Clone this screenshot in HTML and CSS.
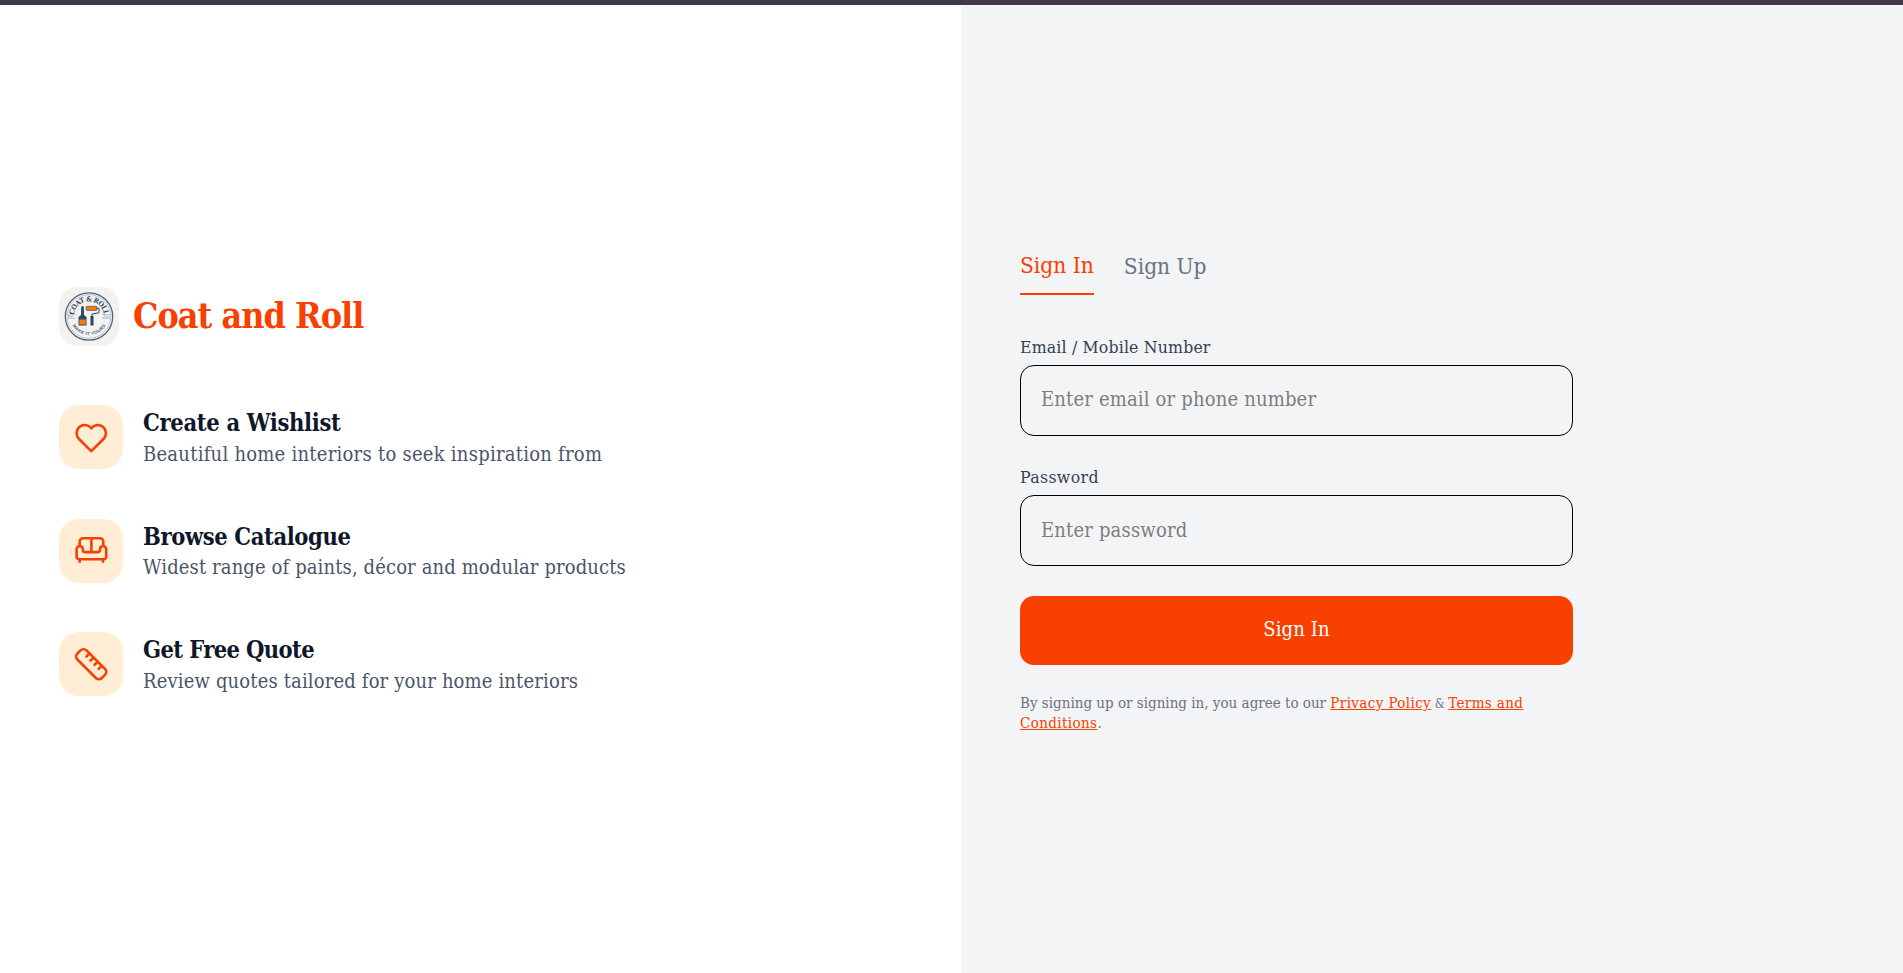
FILE: index.html
```html
<!DOCTYPE html>
<html lang="en">
<head>
<meta charset="utf-8">
<title>Coat and Roll</title>
<link rel="stylesheet" href="styles.css">
</head>
<body>
<div class="page">
  <section class="intro">
    <div class="brand">
      <svg class="logo" viewBox="0 0 60 59">
        <rect width="60" height="59" rx="18" fill="#f4f2ed"/>
        <circle cx="30" cy="29.5" r="23.7" fill="none" stroke="#4c6585" stroke-width="1.3"/>
        <circle cx="30" cy="29.5" r="21.8" fill="none" stroke="#9aabbd" stroke-width=".6"/>
        <path id="top-arc" d="M14.9 29.5a15.1 15.1 0 0 1 30.2 0" fill="none"/>
        <path id="low-arc" d="M11.3 29.5a18.7 18.7 0 0 0 37.4 0" fill="none"/>
        <text class="seal-name" text-anchor="middle"><textPath href="#top-arc" startOffset="50%" textLength="44">COAT &amp; ROLL</textPath></text>
        <text class="seal-motto" text-anchor="middle"><textPath href="#low-arc" startOffset="50%" textLength="40">MAKE IT YOURS</textPath></text>
        <path d="M7.500 27.500h9M7.500 31.500h9M43 27.500h9M43 31.500h9" stroke="#a9b5c2" stroke-width=".6"/>
        <text class="seal-year" x="9" y="30.700">EST</text><text class="seal-year" x="44" y="30.700">2024</text>
        <path d="M22.200 20q1.300-2 2.600 0l.2 8 2.500 2v8.500h-8V30l2.500-2z" fill="#28456b"/>
        <path d="M20.300 32.500h6.500v5h-6.500z" fill="#f57c0c"/>
        <rect x="27" y="19.300" width="11" height="4.200" rx="1" fill="#f57c0c" stroke="#28456b" stroke-width=".6"/>
        <path d="M38 21.300h2v4.500l-7 1.200v5" fill="none" stroke="#28456b" stroke-width="1"/>
        <path d="M31.500 29h3v9.500h-3z" fill="#28456b"/>
      </svg>
      <h1 class="brand-name">Coat and Roll</h1>
    </div>
    <div class="feature">
      <svg class="tile" viewBox="0 0 64 64"><path transform="translate(12.700 13.500) scale(1.630)" stroke-width="1.600" d="M19.500 12.572 12 20l-7.500-7.428A5 5 0 1 1 12 6.006a5 5 0 1 1 7.500 6.572"/></svg>
      <div class="copy"><h2 class="name n1">Create a Wishlist</h2><p class="desc d1">Beautiful home interiors to seek inspiration from</p></div>
    </div>
    <div class="feature second">
      <svg class="tile" viewBox="0 0 64 64"><path d="M20.700 26.500V22.500a3.300 3.300 0 0 1 3.300-3.300H41a3.300 3.300 0 0 1 3.300 3.300v4M32.400 19.200v13.500M17.600 30.200a2.900 2.900 0 0 1 2.900-3h.6a2.800 2.800 0 0 1 2.700 2.700v1.200a2 2 0 0 0 2 2h13.200a2 2 0 0 0 2-2v-1.200a2.800 2.800 0 0 1 2.700-2.700h.6a2.900 2.900 0 0 1 2.900 3v7.600a2.500 2.500 0 0 1-2.500 2.500H20.100a2.500 2.500 0 0 1-2.500-2.500zM20.700 40.500v2.300M44 40.500v2.300"/></svg>
      <div class="copy"><h2 class="name n2">Browse Catalogue</h2><p class="desc d2">Widest range of paints, décor and modular products</p></div>
    </div>
    <div class="feature">
      <svg class="tile" viewBox="0 0 64 64"><g transform="translate(32.200 32.200) rotate(45)"><rect x="-17.300" y="-6.400" width="34.600" height="12.800" rx="4.200"/><path d="M-8.800-6.400v4.400M-3-6.400v4.400M2.800-6.400v4.400M8.600-6.400v4.400"/></g></svg>
      <div class="copy"><h2 class="name n3">Get Free Quote</h2><p class="desc d3">Review quotes tailored for your home interiors</p></div>
    </div>
  </section>
  <section class="auth">
    <div class="tabs"><span class="tab active">Sign In</span><span class="tab idle">Sign Up</span></div>
    <label class="label l1" for="user">Email / Mobile Number</label>
    <input class="field" id="user" placeholder="Enter email or phone number">
    <label class="label l2" for="pass">Password</label>
    <input class="field pass" id="pass" type="password" placeholder="Enter password">
    <button class="submit">Sign In</button>
    <p class="terms">By signing up or signing in, you agree to our <a>Privacy Policy</a><span class="amp"> &amp; </span><a>Terms and<br>Conditions</a>.</p>
  </section>
</div>
</body>
</html>
```
FILE: styles.css
```css
* { box-sizing: border-box; }
body { margin: 0; background: #fff; font-family: "Roboto Slab", "DejaVu Serif Condensed", "DejaVu Serif", serif; }
h1, h2, p { margin: 0; font-weight: 400; }
.page { height: 973px; border-top: 5px solid #40374b; display: grid; grid-template-columns: 961px 1fr; overflow: hidden; }
.intro { padding: 282px 0 0 59px; }
.brand { display: flex; align-items: center; gap: 14px; height: 59px; margin-bottom: 59px; }
.logo { width: 60px; height: 59px; }
.seal-name { font-size: 7px; font-weight: 700; fill: #28456b; }
.seal-motto { font-size: 4.500px; font-weight: 700; fill: #4c6585; font-family: "Liberation Sans", sans-serif; }
.seal-year { font-size: 3px; fill: #8b9bad; font-family: "Liberation Sans", sans-serif; }
.brand-name { font-size: 35.500px; line-height: 48px; padding-bottom: 1px; font-weight: 700; letter-spacing: -.95px; color: #f84000; white-space: nowrap; }
.feature { display: flex; gap: 20px; height: 64px; margin-bottom: 50px; }
.second { margin-bottom: 49px; }
.tile { width: 64px; height: 64px; border-radius: 20px; background: #ffedd5; fill: none; stroke: #f84000; stroke-width: 2.600; stroke-linecap: round; stroke-linejoin: round; }
.copy { padding-top: 1px; }
.name { font-size: 23.500px; line-height: 34px; font-weight: 700; color: #0f172a; white-space: nowrap; }
.n1 { letter-spacing: -.33px; }
.n2 { letter-spacing: -.39px; }
.n3 { letter-spacing: -.62px; }
.desc { font-size: 20px; line-height: 28px; color: #4a5568; white-space: nowrap; }
.d1 { letter-spacing: .25px; }
.d2 { letter-spacing: .12px; line-height: 26px; }
.d3 { letter-spacing: .15px; }
.auth { background: #f3f4f6; padding: 240px 0 0 59px; display: flex; flex-direction: column; align-items: flex-start; }
.tabs { display: flex; gap: 30px; height: 50px; }
.tab { font-size: 22.500px; line-height: 40px; white-space: nowrap; height: 50px; color: #6b7280; }
.active { color: #f84000; border-bottom: 2px solid #f84000; }
.idle { padding-top: 1px; }
.label { font-size: 17.500px; line-height: 24px; color: #334155; margin-top: 40px; letter-spacing: .17px; }
.label.l2 { margin-top: 29px; letter-spacing: .38px; }
.field { width: 553px; height: 71px; margin-top: 6px; border: 1px solid #000; border-radius: 14px; background: transparent; padding: 0 20px 4px; font-family: inherit; font-size: 20px; letter-spacing: .17px; }
.field.pass { padding-bottom: 2px; }
.field::placeholder { color: #7d7d7d; opacity: 1; }
.submit { width: 553px; height: 69px; margin-top: 30px; border: 0; border-radius: 14px; background: #f84000; color: #fff; font-family: inherit; font-size: 20px; letter-spacing: .1px; padding: 0 0 4px; }
.terms { font-size: 15px; line-height: 20px; margin-top: 28px; color: #6b7280; white-space: nowrap; }
.terms a { color: #f84000; text-decoration: underline; letter-spacing: .38px; }
.amp { font-size: 12.500px; line-height: 0; }
```
